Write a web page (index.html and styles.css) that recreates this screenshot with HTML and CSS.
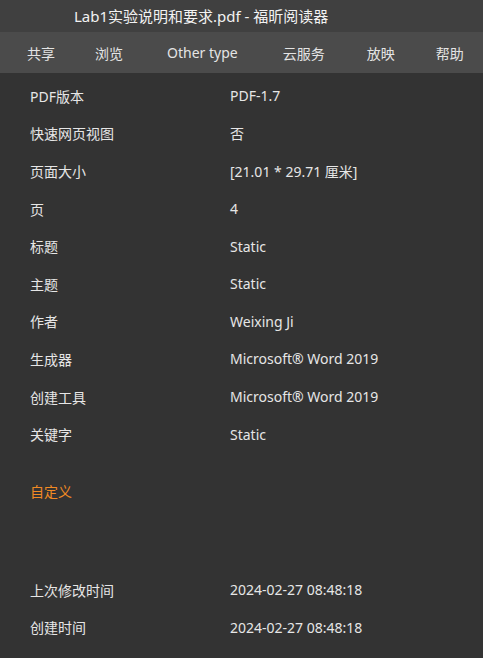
FILE: index.html
```html
<!DOCTYPE html>
<html lang="zh">
<head>
<meta charset="utf-8">
<link rel="stylesheet" href="styles.css">
</head>
<body>
<div class="titlebar">Lab1实验说明和要求.pdf - 福昕阅读器</div>
<nav class="menubar">
  <span class="m m1">共享</span>
  <span class="m m2">浏览</span>
  <span class="m m3">Other type</span>
  <span class="m m4">云服务</span>
  <span class="m m5">放映</span>
  <span class="m m6">帮助</span>
</nav>
<main class="content">
  <div class="props">
    <div class="row"><span class="k">PDF版本</span><span class="v">PDF-1.7</span></div>
    <div class="row"><span class="k">快速网页视图</span><span class="v">否</span></div>
    <div class="row"><span class="k">页面大小</span><span class="v">[21.01 * 29.71 厘米]</span></div>
    <div class="row"><span class="k">页</span><span class="v">4</span></div>
    <div class="row"><span class="k">标题</span><span class="v">Static</span></div>
    <div class="row"><span class="k">主题</span><span class="v">Static</span></div>
    <div class="row"><span class="k">作者</span><span class="v">Weixing Ji</span></div>
    <div class="row"><span class="k">生成器</span><span class="v">Microsoft® Word 2019</span></div>
    <div class="row"><span class="k">创建工具</span><span class="v">Microsoft® Word 2019</span></div>
    <div class="row"><span class="k">关键字</span><span class="v">Static</span></div>
  </div>
  <div class="section">自定义</div>
  <div class="props dates">
    <div class="row"><span class="k">上次修改时间</span><span class="v">2024-02-27 08:48:18</span></div>
    <div class="row"><span class="k">创建时间</span><span class="v">2024-02-27 08:48:18</span></div>
  </div>
</main>
</body>
</html>
```

FILE: styles.css
```css
html, body {
  margin: 0;
  padding: 0;
  background: #333333;
  height: 100%;
  overflow: hidden;
}
body {
  font-family: "Noto Sans", "Noto Sans CJK SC", sans-serif;
  font-size: 14px;
  color: #e6e6e6;
}
.titlebar {
  height: 32px;
  background: #404040;
  color: #f2f2f2;
  font-size: 15px;
  line-height: 32px;
  padding-left: 74px;
}
.menubar {
  height: 41px;
  background: #4b4b4b;
  display: flex;
  align-items: center;
  padding-left: 27px;
  color: #e4e4e4;
  font-size: 14px;
}
.m { white-space: nowrap; }
.m2 { margin-left: 40px; }
.m3 { margin-left: 44px; }
.m4 { margin-left: 45px; }
.m5 { margin-left: 42px; }
.m6 { margin-left: 41px; }
.content {
  padding: 0 0 0 30px;
}
.props {
  display: flex;
  flex-direction: column;
}
.props:first-child {
  padding-top: 4px;
}
.row {
  display: flex;
  height: 37.6px;
  align-items: center;
}
.k {
  width: 200px;
  flex: none;
}
.v {
  flex: none;
}
.section {
  color: #f08a24;
  height: 38px;
  display: flex;
  align-items: center;
  margin-top: 19px;
}
.dates {
  margin-top: 61px;
}
```
